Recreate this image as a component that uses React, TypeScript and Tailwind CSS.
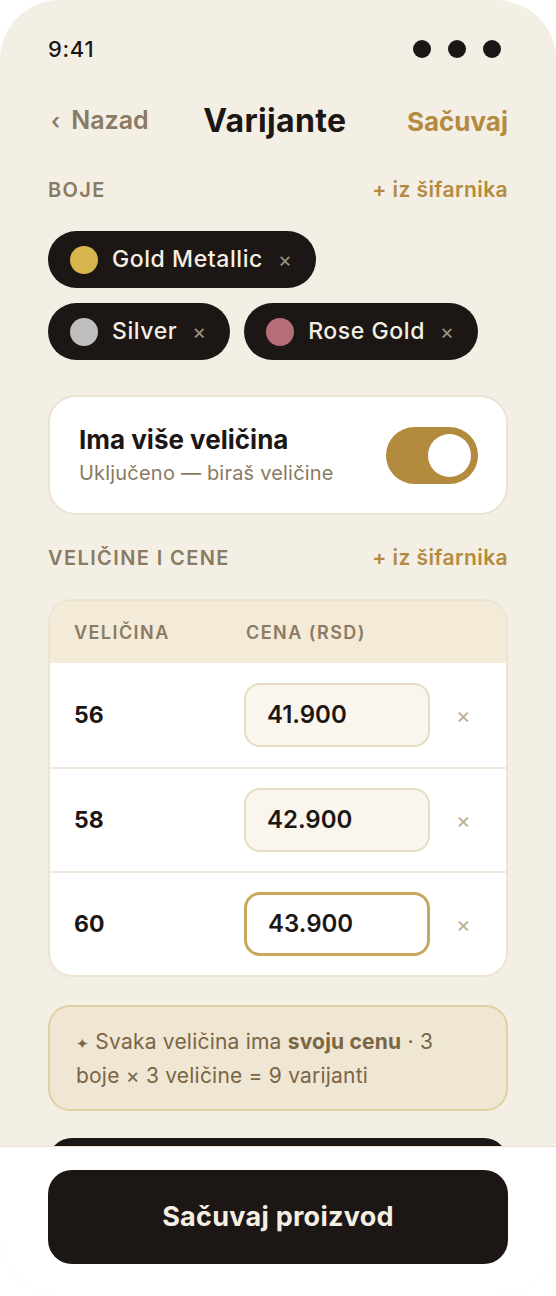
import React from 'react';

const colors = [
  { name: 'Gold Metallic', dot: 'bg-[#d8b44c]' },
  { name: 'Silver', dot: 'bg-[#c0bfbe]' },
  { name: 'Rose Gold', dot: 'bg-[#b56e78]' },
];

const sizes = [
  { size: '56', price: '41.900', active: false },
  { size: '58', price: '42.900', active: false },
  { size: '60', price: '43.900', active: true },
];

function Chip({ name, dot }: { name: string; dot: string }) {
  return (
    <div className="flex h-[57px] items-center rounded-full bg-[#1c1714] pl-[22px] pr-[24px]">
      <span className={`h-[28px] w-[28px] rounded-full ${dot}`} />
      <span className="ml-[14px] text-[23px] font-medium tracking-[0.025em] text-[#f5efe3]">{name}</span>
      <span className="ml-[15px] text-[21px] leading-none text-[#9a9080]">×</span>
    </div>
  );
}

function SectionLabel({ title }: { title: string }) {
  return (
    <div className="flex h-[24px] items-center justify-between">
      <span className="text-[20px] font-semibold tracking-[0.07em] text-[#8a7a62]">{title}</span>
      <span className="text-[21px] font-semibold tracking-[0.02em] text-[#b38b3f]">+ iz šifarnika</span>
    </div>
  );
}

export default function App() {
  return (
    <div className="h-[1296px] w-[556px] bg-white" style={{ fontFamily: 'Inter, "Noto Sans", sans-serif' }}>
      <div className="flex h-full flex-col overflow-hidden rounded-[60px] bg-[#f4efe5]">
        <div className="h-[1146px] overflow-hidden px-[48px]">
          {/* status bar */}
          <div className="mt-[36px] flex h-[26px] items-center justify-between">
            <span className="text-[22px] font-medium tracking-[0.03em] text-[#1c1714]">9:41</span>
            <div className="flex gap-[17px] pr-[7px]">
              <span className="h-[18px] w-[18px] rounded-full bg-[#1c1714]" />
              <span className="h-[18px] w-[18px] rounded-full bg-[#1c1714]" />
              <span className="h-[18px] w-[18px] rounded-full bg-[#1c1714]" />
            </div>
          </div>

          {/* nav */}
          <div className="mt-[39px] flex h-[40px] items-center justify-between">
            <span className="flex items-center text-[25px] font-semibold text-[#8a7a62]">
              <span className="mr-[11px] ml-[3px] text-[22px]">‹</span>Nazad
            </span>
            <span className="mr-[6px] text-[32px] font-bold tracking-[0.01em] text-[#1c1714]">Varijante</span>
            <span className="text-[26px] font-bold text-[#b38b3f]">Sačuvaj</span>
          </div>

          <div className="mt-[37px]">
            <SectionLabel title="BOJE" />
          </div>

          <div className="mt-[29px] flex flex-col gap-[15px]">
            <div className="flex">
              <Chip {...colors[0]} />
            </div>
            <div className="flex gap-[14px]">
              <Chip {...colors[1]} />
              <Chip {...colors[2]} />
            </div>
          </div>

          {/* toggle card */}
          <div className="mt-[35px] flex h-[120px] items-center justify-between rounded-[28px] border-2 border-[#ece3d2] bg-white pl-[29px] pr-[28px]">
            <div>
              <div className="text-[26px] font-bold leading-[30px] text-[#1c1714]">Ima više veličina</div>
              <div className="mt-[5px] text-[20px] leading-[26px] tracking-[0.01em] text-[#8a7a62]">Uključeno — biraš veličine</div>
            </div>
            <div className="flex h-[57px] w-[92px] items-center justify-end rounded-full bg-[#b38b3f] pr-[7px]">
              <span className="h-[43px] w-[43px] rounded-full bg-white" />
            </div>
          </div>

          <div className="mt-[31px]">
            <SectionLabel title="VELIČINE I CENE" />
          </div>

          {/* sizes table */}
          <div className="mt-[29px] overflow-hidden rounded-[24px] border-2 border-[#ece3d2] bg-white">
            <div className="flex h-[62px] items-center bg-[#f3ead8] text-[18px] font-semibold tracking-[0.08em] text-[#8a7a62]">
              <span className="w-[196px] pl-[24px]">VELIČINA</span>
              <span>CENA (RSD)</span>
            </div>
            {sizes.map((row, i) => (
              <div
                key={row.size}
                className={`flex h-[104px] items-center ${i > 0 ? 'border-t-2 border-[#f0e8da]' : ''}`}
              >
                <span className="w-[194px] pl-[24px] text-[23px] font-bold text-[#1c1714]">{row.size}</span>
                <div
                  className={`flex h-[64px] w-[186px] items-center rounded-[16px] pl-[21px] text-[24px] font-semibold text-[#1c1714] ${
                    row.active ? 'border-[3px] border-[#c9a75e] bg-white' : 'border-2 border-[#e6dbc4] bg-[#faf6ee]'
                  }`}
                >
                  {row.price}
                </div>
                <span className="ml-[26px] text-[22px] leading-none text-[#bcae90]">×</span>
              </div>
            ))}
          </div>

          {/* info */}
          <div className="mt-[28px] h-[106px] rounded-[22px] border-2 border-[#e2d0a4] bg-[#efe6d4] px-[26px] pt-[19px] text-[21px] leading-[32px] tracking-[0.01em] text-[#7a6545]">
            <span className="text-[15px]">✦</span> Svaka veličina ima <b className="font-bold">svoju cenu</b> · 3
            <br />
            boje × 3 veličine = 9 varijanti
          </div>

          <div className="mt-[27px] h-[94px] rounded-[24px] bg-[#1c1714]" />
        </div>

        {/* bottom bar */}
        <div className="flex-1 border-t border-[#e9e2d4] bg-white px-[48px] pt-[23px]">
          <button className="flex h-[94px] w-full items-center justify-center rounded-[24px] bg-[#1c1714] text-[27px] font-bold tracking-[0.01em] text-[#f5efe3]">
            Sačuvaj proizvod
          </button>
        </div>
      </div>
    </div>
  );
}
